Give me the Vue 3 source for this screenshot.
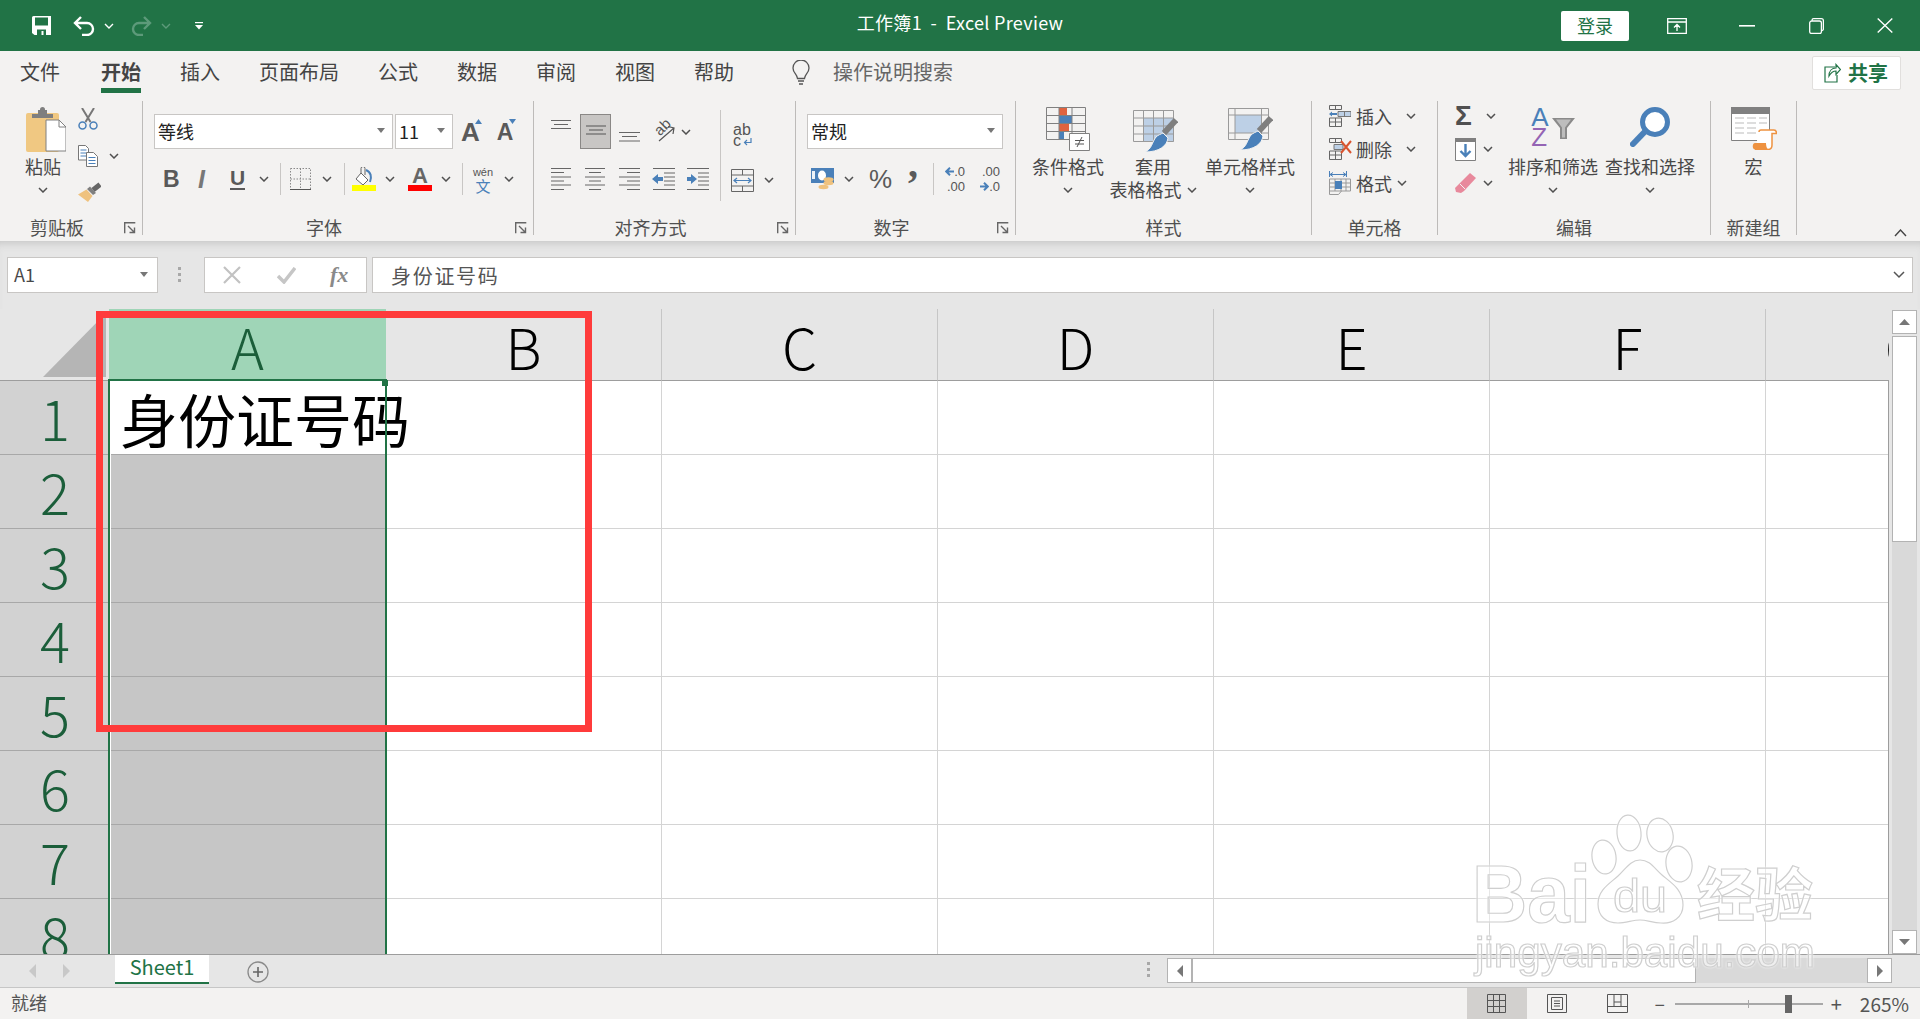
<script setup>
const cols = ['A', 'B', 'C', 'D', 'E', 'F', 'G']
const rows = [1, 2, 3, 4, 5, 6, 7, 8]
const tabs = ['文件', '开始', '插入', '页面布局', '公式', '数据', '审阅', '视图', '帮助']

const cellClass = (col, row) => ({
  'cell-sel': col === 'A' && row > 1,
  'cell-a': col === 'A',
})
</script>

<template>
  <div class="app">
    <!-- shared icon bits -->
    <svg class="defs" width="0" height="0">
      <symbol id="chev" viewBox="0 0 10 6"><path d="M1 1l4 4 4-4" fill="none" stroke="#505050" stroke-width="1.5" /></symbol>
      <symbol id="launch" viewBox="0 0 12 12"><path d="M.7 11.3V.7h10.6M4 4l6 6M10.5 5.5v5h-5" fill="none" stroke="#666" stroke-width="1.4" /></symbol>
    </svg>

    <header class="titlebar">
      <div class="qat">
        <svg class="m32" width="19" height="19" viewBox="0 0 19 19"><path d="M0 1.500A1.500 1.500 0 0 1 1.500 0H19v19H2.500L0 17z" fill="#fff" /><path d="M3 1.500h13v8H3z" fill="#217346" /><path d="M5 13.500h9V19H5z" fill="#217346" /><path d="M9.500 15h2v4h-2z" fill="#fff" /></svg>
        <svg class="m22" width="22" height="20" viewBox="0 0 22 20"><path d="M8 1L2 7l6 6M2 7h12a6 6 0 0 1 0 12H9" fill="none" stroke="#fff" stroke-width="2.400" /></svg>
        <svg class="chev-w m9" width="10" height="6"><path d="M1 1l4 4 4-4" fill="none" stroke="#fff" stroke-width="1.400" /></svg>
        <svg class="m17" width="21" height="20" viewBox="0 0 21 20"><path d="M13 1l6 6-6 6M19 7H8a6 6 0 0 0 0 12h4" fill="none" stroke="#5d9a7a" stroke-width="2.400" /></svg>
        <svg class="m9" width="10" height="6"><path d="M1 1l4 4 4-4" fill="none" stroke="#5d9a7a" stroke-width="1.400" /></svg>
        <svg class="m24" width="8" height="8" viewBox="0 0 8 8"><path d="M0 .6h8" stroke="#fff" stroke-width="1.200" /><path d="M0 3h8L4 7.500z" fill="#fff" /></svg>
      </div>
      <div class="doc-title">工作簿1&nbsp;&nbsp;-&nbsp;&nbsp;Excel Preview</div>
      <div class="win">
        <button class="login">登录</button>
        <svg class="m38" width="20" height="16" viewBox="0 0 20 16"><path d="M.7.7h18.600v14.600H.7zM.7 4h18.600M10 13V7M7 9.500l3-3 3 3" fill="none" stroke="#fff" stroke-width="1.300" /></svg>
        <svg class="m52" width="16" height="2"><rect width="16" height="1.600" fill="#fff" /></svg>
        <svg class="m54" width="15" height="16" viewBox="0 0 15 16"><path d="M3 3V2.200A1.600 1.600 0 0 1 4.600.7h7.800a2 2 0 0 1 2 2V11A1.600 1.600 0 0 1 13 12.600h-.6M.7 5a2 2 0 0 1 2-2H10.400a2 2 0 0 1 2 2v8.800a1.600 1.600 0 0 1-1.600 1.600H2.300a1.600 1.600 0 0 1-1.600-1.600z" fill="none" stroke="#fff" stroke-width="1.300" /></svg>
        <svg class="m53 m-end" width="16" height="15" viewBox="0 0 16 15"><path d="M.7.500l14.600 14M15.300.500L.7 14.500" stroke="#fff" stroke-width="1.400" /></svg>
      </div>
    </header>

    <nav class="tabs">
      <span v-for="t in tabs" :key="t" class="tab" :class="{ 'tab-on': t === '开始' }">{{ t }}</span>
      <svg class="bulb" width="18" height="26" viewBox="0 0 18 26"><path d="M5.500 18.500C5 14 1 13 1 8a8 8 0 0 1 16 0c0 5-4 6-4.500 10.500zM6 21h6M7 24h4" fill="none" stroke="#555" stroke-width="1.300" /></svg>
      <span class="search">操作说明搜索</span>
      <span class="share">
        <svg width="17" height="20" viewBox="0 0 17 20"><path d="M11 4H1v15h12v-7" fill="none" stroke="#217346" stroke-width="1.200" /><path d="M5 13c0-5 3-8 7-8V1.500l4.500 5-4.500 5V8c-3 0-5 1.500-7 5z" fill="none" stroke="#217346" stroke-width="1.200" /></svg>
        <b>共享</b>
      </span>
    </nav>

    <section class="ribbon">
      <!-- 剪贴板 -->
      <div class="group g-clip">
        <div class="body">
          <div class="big paste">
            <div class="big-ic">
              <svg class="paste-ic" width="40" height="45" viewBox="0 0 40 45">
                <rect y="6" width="33" height="39" rx="2" fill="#f0c882" />
                <path d="M6 7h21V11H6zM12 3h9v5h-9z" fill="#7f7f7f" /><circle cx="16.500" cy="2.500" r="2.500" fill="#7f7f7f" />
                <path d="M20 21h13l7 7v24H20z" transform="translate(0 -8)" fill="#fff" stroke="#808080" />
                <path d="M33 13v7h7" fill="none" stroke="#808080" />
              </svg>
            </div>
            <span class="big-text">粘贴</span>
            <svg class="chev big-chev"><use href="#chev" /></svg>
          </div>
          <div class="clip-small">
            <svg width="20" height="22" viewBox="0 0 20 22"><path d="M4 0l8.500 14M16 0L7.500 14" stroke="#777" stroke-width="2" /><circle cx="4.500" cy="17.500" r="3.500" fill="none" stroke="#4a80b9" stroke-width="1.500" /><circle cx="15.500" cy="17.500" r="3.500" fill="none" stroke="#4a80b9" stroke-width="1.500" /></svg>
            <div class="clip-copy">
              <svg width="20" height="22" viewBox="0 0 20 22"><path d="M.5.500h7l3 3V15H.5z" fill="#fff" stroke="#777" /><path d="M2.500 5h6M2.500 8h6M2.500 11h6" stroke="#4a80b9" /><path d="M8.500 7.500h7l4 4v10h-11z" fill="#fff" stroke="#777" /><path d="M10.500 12.500h7M10.500 15.500h7M10.500 18.500h7" stroke="#4a80b9" /></svg>
              <svg class="chev m11"><use href="#chev" /></svg>
            </div>
            <svg width="23" height="20" viewBox="0 0 23 20"><path d="M22 2.500L15 8" stroke="#666" stroke-width="5" /><path d="M12 4.500l6 6.500-3 2-6-6z" fill="#7f7f7f" /><path d="M8.500 7.500l6 6.500L10 20 0 12.500z" fill="#efc27e" /></svg>
          </div>
        </div>
        <div class="foot foot-l"><span class="foot-t">剪贴板</span><svg class="launch"><use href="#launch" /></svg></div>
      </div>

      <!-- 字体 -->
      <div class="group g-font">
        <div class="body col">
          <div class="r1">
            <div class="combo w239"><span>等线</span><i class="tri" /></div>
            <div class="combo w58 m2"><span>11</span><i class="tri" /></div>
            <div class="grow-a m8">A<svg width="7" height="5"><path d="M0 5h7L3.500 0z" fill="#4a80b9" /></svg></div>
            <div class="shrink-a m15">A<svg width="7" height="5"><path d="M0 0h7L3.500 5z" fill="#4a80b9" /></svg></div>
          </div>
          <div class="r2">
            <span class="fmt w14 m9">B</span>
            <span class="fmt w11 m21 ital">I</span>
            <span class="fmt w15 m21 under">U</span>
            <svg class="chev m14"><use href="#chev" /></svg>
            <i class="vline m11" />
            <svg class="m9" width="21" height="22" viewBox="0 0 21 22"><path d="M.5.500h20v21H.5zM10.500.500v21M.5 11h20" fill="none" stroke="#8a8a8a" stroke-dasharray="1.500 1.500" /><path d="M0 21.500h21" stroke="#555" /></svg>
            <svg class="chev m11"><use href="#chev" /></svg>
            <i class="vline m12" />
            <svg class="m7" width="24" height="24" viewBox="0 0 24 24"><path d="M9 6l7 7-5 5-7-6z" fill="#fff" stroke="#666" /><path d="M9 6V1.500a2 2 0 0 1 4 0V8" fill="none" stroke="#666" /><path d="M14 3c5 2 6 7 4 12" fill="none" stroke="#4a80b9" stroke-width="2" /><rect y="18" width="24" height="6" fill="#ffff00" /></svg>
            <svg class="chev m9"><use href="#chev" /></svg>
            <div class="font-color m13"><span>A</span></div>
            <svg class="chev m9"><use href="#chev" /></svg>
            <i class="vline m11" />
            <div class="wen m10"><span class="wen-a">wén</span><span class="wen-b">文</span></div>
            <svg class="chev m11"><use href="#chev" /></svg>
          </div>
        </div>
        <div class="foot foot-l"><span class="foot-t">字体</span><svg class="launch"><use href="#launch" /></svg></div>
      </div>

      <!-- 对齐方式 -->
      <div class="group g-align">
        <div class="body">
          <div class="align-left">
            <div class="r1">
              <svg class="m17" width="20" height="35" viewBox="0 0 20 35"><path d="M0 6.500h20M3 10.500h14M0 14.500h20" stroke="#666" /></svg>
              <div class="align-on m9"><svg width="20" height="33" viewBox="0 0 20 33"><path d="M0 11h20M3 15h14M0 19h20" stroke="#555" /></svg></div>
              <svg class="m8" width="21" height="35" viewBox="0 0 21 35"><path d="M0 18.500h21M3 22.500h15M0 27h21" stroke="#666" /></svg>
              <div class="orient m14"><span>ab</span><svg class="orient-arrow" width="22" height="20" viewBox="0 0 22 20"><path d="M5 18L20 5M14 3.500l6 1.500-1 6" fill="none" stroke="#555" stroke-width="1.200" /></svg></div>
              <svg class="chev m5"><use href="#chev" /></svg>
            </div>
            <div class="r2">
              <svg class="m17" width="20" height="22" viewBox="0 0 20 22"><path d="M0 .5h20M0 4.500h13M0 9h20M0 13h13M0 17h20M0 21.500h13" stroke="#666" /></svg>
              <svg class="m14" width="20" height="22" viewBox="0 0 20 22"><path d="M0 .5h20M4 4.500h12M0 9h20M4 13h12M0 17h20M4 21.500h12" stroke="#666" /></svg>
              <svg class="m14" width="21" height="22" viewBox="0 0 21 22"><path d="M0 .5h21M8 4.500h13M0 9h21M8 13h13M0 17h21M8 21.500h13" stroke="#666" /></svg>
              <svg class="m12" width="23" height="22" viewBox="0 0 23 22"><path d="M1 .5h22M12 5h11M12 9h11M12 13h11M12 17h11M1 21.500h22" stroke="#666" /><path d="M0 11l6-5v3h5v4H6v3z" fill="#4a80b9" /></svg>
              <svg class="m12" width="22" height="22" viewBox="0 0 22 22"><path d="M0 .5h22M11 5h11M11 9h11M11 13h11M11 17h11M0 21.500h22" stroke="#666" /><path d="M10 11L4 6v3H0v4h4v3z" fill="#4a80b9" /></svg>
            </div>
          </div>
          <i class="vline-tall" />
          <div class="align-right">
            <div class="wrap">
              <div class="wrap-ab">ab</div>
              <div class="wrap-c">c<svg width="9" height="8" viewBox="0 0 9 8"><path d="M8 0v4.500H2M4 2L1.500 4.500 4 7" fill="none" stroke="#4a80b9" stroke-width="1.200" /></svg></div>
            </div>
            <div class="r2 merge">
              <svg width="23" height="23" viewBox="0 0 23 23"><path d="M.5.500h22v22H.5zM.5 6h22M.5 17h22M11.500.500V6M11.500 17v5.500" fill="none" stroke="#666" /><path d="M3 11.500h17M6 9l-3 2.500L6 14M17 9l3 2.500L17 14" fill="none" stroke="#4a80b9" stroke-width="1.200" /></svg>
              <svg class="chev m10"><use href="#chev" /></svg>
            </div>
          </div>
        </div>
        <div class="foot foot-l"><span class="foot-t">对齐方式</span><svg class="launch"><use href="#launch" /></svg></div>
      </div>

      <!-- 数字 -->
      <div class="group g-num">
        <div class="body col">
          <div class="r1">
            <div class="combo w196"><span>常规</span><i class="tri" /></div>
          </div>
          <div class="r2">
            <svg class="m4" width="23" height="23" viewBox="0 0 23 23"><rect width="23" height="15" fill="#4a80b9" /><ellipse cx="11" cy="7.500" rx="4" ry="5" fill="#fff" /><rect x="1" y="3" width="3" height="8" fill="#fff" opacity=".9" /><ellipse cx="17.500" cy="11.500" rx="5" ry="2.200" fill="#efc27e" /><ellipse cx="17.500" cy="15" rx="5" ry="2.200" fill="#efc27e" /><ellipse cx="12.500" cy="19" rx="5" ry="2.200" fill="#efc27e" /></svg>
            <svg class="chev m10"><use href="#chev" /></svg>
            <span class="pct m15">%</span>
            <span class="comma m18">,</span>
            <i class="vline m14" />
            <div class="dec m9"><span><svg width="9" height="9" viewBox="0 0 9 9"><path d="M9 4.500H2M5 .8L1.200 4.500 5 8.200" fill="none" stroke="#4a80b9" stroke-width="2" /></svg>.0</span><span>.00</span></div>
            <div class="dec m13"><span>.00</span><span><svg width="9" height="9" viewBox="0 0 9 9"><path d="M0 4.500h7M4 .8l3.800 3.700L4 8.200" fill="none" stroke="#4a80b9" stroke-width="2" /></svg>.0</span></div>
          </div>
        </div>
        <div class="foot foot-l"><span class="foot-t">数字</span><svg class="launch"><use href="#launch" /></svg></div>
      </div>

      <!-- 样式 -->
      <div class="group g-style">
        <div class="body">
          <div class="big w80">
            <div class="big-ic">
              <svg width="44" height="44" viewBox="0 0 44 44">
                <path d="M13 0h8v8h-8zM26 0" fill="#df6340" />
                <path d="M13 8h13v8H13z" fill="#4a80b9" />
                <path d="M13 16h10v8H13z" fill="#df6340" />
                <path d="M13 25h5v7h-5z" fill="#4a80b9" />
                <path d="M.5.500h39v32H.5zM.5 8.500h39M.5 16.500h39M.5 24.500h39M13 .5v32M26 .5v32" fill="none" stroke="#808080" />
                <path d="M23.500 26.500h20v17h-20z" fill="#fff" stroke="#808080" />
                <path d="M29 33.500h9M29 37h9M31 40l5-10" stroke="#555" fill="none" />
              </svg>
            </div>
            <span class="big-text">条件格式</span>
            <svg class="chev big-chev"><use href="#chev" /></svg>
          </div>
          <div class="big w88 m1">
            <div class="big-ic">
              <svg class="ic-table" width="45" height="42" viewBox="0 0 45 42">
                <path d="M11 8h30v24H11z" fill="#bdd0e6" />
                <path d="M.5.500h40v31H.5zM.5 8h40M.5 16h40M.5 24h40M10.500.5v31M20.500.5v31M30.500.5v31" fill="none" stroke="#9a9a9a" />
                <path d="M43 10L31 23" stroke="#7f7f7f" stroke-width="6" />
                <path d="M30 23l5 5c-1 8-9 14-23 14 7-3 7-10 11-15 2-2 5-3 7-4z" fill="#4a80b9" stroke="#f3f2f1" />
              </svg>
            </div>
            <span class="big-text">套用</span>
            <span class="big-text">表格格式<svg class="chev m5"><use href="#chev" /></svg></span>
          </div>
          <div class="big w90 m8">
            <div class="big-ic">
              <svg class="ic-style" width="45" height="42" viewBox="0 0 45 42">
                <path d="M7 7h26v18H7z" fill="#bdd0e6" />
                <path d="M.5.500h40v31H.5zM.5 7h40M.5 25h40M7 .5v31M33.500.5v31" fill="none" stroke="#9a9a9a" />
                <path d="M43 10L31 23" stroke="#7f7f7f" stroke-width="6" />
                <path d="M30 23l5 5c-1 8-9 14-23 14 7-3 7-10 11-15 2-2 5-3 7-4z" fill="#4a80b9" stroke="#f3f2f1" />
              </svg>
            </div>
            <span class="big-text">单元格样式</span>
            <svg class="chev big-chev"><use href="#chev" /></svg>
          </div>
        </div>
        <div class="foot"><span class="foot-t">样式</span></div>
      </div>

      <!-- 单元格 -->
      <div class="group g-cells">
        <div class="body col">
          <div class="cell-btn">
            <svg width="22" height="22" viewBox="0 0 22 22"><path d="M.5.500h12v4H.5zM6.500.5v4M.5 13h12v8.500H.5zM.5 17h12M6.500 13v8.500" fill="none" stroke="#666" /><path d="M9 6.500h13v5H9zM15.500 6.500v5" fill="#bdd0e6" stroke="#777" /><path d="M0 9l3-2.500v1.500h5v2H3v1.500z" fill="#4a80b9" /></svg>
            <span>插入</span>
            <svg class="chev m14"><use href="#chev" /></svg>
          </div>
          <div class="cell-btn">
            <svg width="23" height="22" viewBox="0 0 23 22"><path d="M.5.500h12v4H.5zM6.500.5v4M.5 13h12v8.500H.5zM.5 17h12M6.500 13v8.500" fill="none" stroke="#666" /><path d="M5 6.500h9v5H5z" fill="#bdd0e6" stroke="#777" /><path d="M12 3l10 12M22 3L12 15" stroke="#d9542f" stroke-width="2" /></svg>
            <span class="m4">删除</span>
            <svg class="chev m14"><use href="#chev" /></svg>
          </div>
          <div class="cell-btn">
            <svg width="22" height="24" viewBox="0 0 22 24"><path d="M1 3.500h16M4 1.500l-3 2 3 2M14 1.500l3 2-3 2M.5 0v6M17.500 0v6" fill="none" stroke="#4a80b9" /><path d="M.5 8h21v12H.5zM.5 12h21M.5 16h21M6 8v12M12 8v12M17 8v12" fill="none" stroke="#999" /><path d="M6 10h7v8H6z" fill="#4a80b9" /><path d="M.5 20v3.500h9l3-3.500" fill="none" stroke="#999" /></svg>
            <span>格式</span>
            <svg class="chev m5"><use href="#chev" /></svg>
          </div>
        </div>
        <div class="foot"><span class="foot-t">单元格</span></div>
      </div>

      <!-- 编辑 -->
      <div class="group g-edit">
        <div class="body">
          <div class="edit-small">
            <div class="edit-row">
              <span class="sigma">Σ</span>
              <svg class="chev m11"><use href="#chev" /></svg>
            </div>
            <div class="edit-row">
              <svg width="21" height="23" viewBox="0 0 21 23"><path d="M.5.500h20v22H.5z" fill="#fff" stroke="#7f7f7f" /><path d="M0 0h21v4H0z" fill="#7f7f7f" /><path d="M10.500 6v12M5.500 13l5 5 5-5" fill="none" stroke="#4a80b9" stroke-width="2.400" /></svg>
              <svg class="chev m7"><use href="#chev" /></svg>
            </div>
            <div class="edit-row">
              <svg width="21" height="20" viewBox="0 0 21 20"><path d="M15 0l6 5-12 13-3 2-5-1-1-4z" fill="#e8899c" /><path d="M5 11l5 5" stroke="#f3f2f1" /></svg>
              <svg class="chev m7"><use href="#chev" /></svg>
            </div>
          </div>
          <div class="big w90">
            <div class="big-ic sort-ic">
              <div class="az"><span class="az-a">A</span><span class="az-z">Z</span></div>
              <svg width="23" height="21" viewBox="0 0 23 21"><path d="M0 0h23l-8 10v11H8V10z" fill="#8a8a8a" /><path d="M4 1.500h15l-6 8v10h-3V9.500z" fill="#bdbdbd" /></svg>
            </div>
            <span class="big-text">排序和筛选</span>
            <svg class="chev big-chev"><use href="#chev" /></svg>
          </div>
          <div class="big w90 m7">
            <div class="big-ic">
              <svg width="40" height="40" viewBox="0 0 40 40"><circle cx="25" cy="15" r="12.500" fill="#fff" stroke="#4a80b9" stroke-width="5" /><path d="M15.500 24L3 37" stroke="#4a80b9" stroke-width="6" stroke-linecap="round" /></svg>
            </div>
            <span class="big-text">查找和选择</span>
            <svg class="chev big-chev"><use href="#chev" /></svg>
          </div>
        </div>
        <div class="foot"><span class="foot-t">编辑</span></div>
      </div>

      <!-- 新建组 -->
      <div class="group g-new">
        <div class="body">
          <div class="big w-full">
            <div class="big-ic">
              <svg width="46" height="43" viewBox="0 0 46 43">
                <path d="M.5.500h38v33H.5z" fill="#fff" stroke="#808080" />
                <path d="M0 0h39v7H0z" fill="#808080" />
                <path d="M4 11h9M16 11h9M28 11h8M4 16h9M16 16h9M28 16h8M4 21h9M16 21h9M4 26h9M16 26h9" stroke="#bbb" stroke-width="1.200" />
                <path d="M28 25a2 2 0 0 1 2-2h13c2 0 2.500 2 2.500 3.500H41V38c0 3-2 4.500-4 4.500H24" fill="#fff" stroke="#ee9240" stroke-width="1.500" />
                <path d="M24 36h11c0 3 1 6.500 3 6.500H24c-3 0-3-6.500 0-6.500z" fill="#ee9240" />
              </svg>
            </div>
            <span class="big-text">宏</span>
          </div>
        </div>
        <div class="foot"><span class="foot-t">新建组</span></div>
      </div>

      <svg class="collapse" width="13" height="8" viewBox="0 0 13 8"><path d="M1 7l5.500-6L12 7" fill="none" stroke="#444" stroke-width="1.400" /></svg>
    </section>

    <div class="fbar">
      <div class="namebox"><span>A1</span><i class="tri" /></div>
      <div class="dots"><i /><i /><i /></div>
      <div class="fbtns">
        <svg width="18" height="18" viewBox="0 0 18 18"><path d="M1 1l16 16M17 1L1 17" stroke="#c2c2c2" stroke-width="2.200" /></svg>
        <svg class="m36" width="19" height="17" viewBox="0 0 19 17"><path d="M1 9l6 6L18 1" fill="none" stroke="#c6c6c6" stroke-width="3.500" /></svg>
        <span class="fx m34">fx</span>
      </div>
      <div class="finput"><span>身份证号码</span><svg class="chev-f" width="12" height="8" viewBox="0 0 12 8"><path d="M1 1l5 5 5-5" fill="none" stroke="#555" stroke-width="1.500" /></svg></div>
    </div>

    <div class="sheet-wrap">
      <div class="sheet">
        <div class="corner">
          <svg width="109" height="71" viewBox="0 0 109 71"><path d="M43 68L106 4v64z" fill="#b5b5b5" /></svg>
        </div>
        <div v-for="c in cols" :key="c" class="col-head" :class="{ 'head-on': c === 'A' }">{{ c }}</div>
        <template v-for="r in rows" :key="r">
          <div class="row-head">{{ r }}</div>
          <div v-for="c in cols" :key="c + r" class="cell" :class="cellClass(c, r)">
            <span v-if="c === 'A' && r === 1" class="a1-text">身份证号码</span>
          </div>
        </template>
        <div class="sel-outline"><i class="handle" /></div>
        <i class="sheet-edge" />
      </div>
      <div class="vscroll">
        <div class="sb-btn up"><svg width="11" height="6"><path d="M0 6h11L5.500 0z" fill="#777" /></svg></div>
        <div class="sb-thumb" />
        <div class="sb-track" />
        <div class="sb-btn"><svg width="11" height="6"><path d="M0 0h11L5.500 6z" fill="#777" /></svg></div>
      </div>
    </div>

    <div class="sheetbar">
      <svg class="m29" width="7" height="14"><path d="M7 0v14L0 7z" fill="#c8c8c8" /></svg>
      <svg class="m27" width="7" height="14"><path d="M0 0v14l7-7z" fill="#c8c8c8" /></svg>
      <div class="sheet-tab">Sheet1</div>
      <svg class="m38" width="22" height="22" viewBox="0 0 22 22"><circle cx="11" cy="11" r="10" fill="none" stroke="#8a8a8a" stroke-width="1.300" /><path d="M11 6v10M6 11h10" stroke="#666" stroke-width="1.600" /></svg>
      <div class="dots dots-h"><i /><i /><i /></div>
      <div class="hscroll">
        <div class="hs-btn"><svg width="6" height="12"><path d="M6 0v12L0 6z" fill="#777" /></svg></div>
        <div class="hs-thumb" />
        <div class="hs-track" />
        <div class="hs-btn"><svg width="6" height="12"><path d="M0 0v12l6-6z" fill="#777" /></svg></div>
      </div>
    </div>

    <footer class="status">
      <span class="ready">就绪</span>
      <div class="status-right">
        <div class="view-on">
          <svg width="19" height="19" viewBox="0 0 19 19"><path d="M.5.500h18v18H.5zM.5 6.500h18M.5 12.500h18M6.500.5v18M12.500.5v18" fill="none" stroke="#555" /></svg>
        </div>
        <svg class="m20" width="20" height="19" viewBox="0 0 20 19"><path d="M.5.500h19v18H.5z" fill="none" stroke="#555" /><path d="M4.500 3.500h11v12h-11zM7 7h6M7 9.500h6M7 12h6" fill="none" stroke="#555" /></svg>
        <svg class="m40" width="21" height="19" viewBox="0 0 21 19"><path d="M.5.500h20v18H.5zM.5 12.500h20M7 .5v12M14 .5v12M7 8h7" fill="none" stroke="#555" /></svg>
        <span class="zoom-m">−</span>
        <div class="slider"><i class="slider-tick" /><i class="slider-thumb" /></div>
        <span class="zoom-p">+</span>
        <span class="zoom-v">265%</span>
      </div>
    </footer>

    <!-- over everything: the annotation box and the watermark -->
    <div class="red-box" />
    <svg class="wm" width="1920" height="1019" viewBox="0 0 1920 1019">
      <g class="wm-shape">
        <ellipse cx="1604" cy="857" rx="12" ry="17" transform="rotate(-8 1604 857)" />
        <ellipse cx="1629" cy="833" rx="12" ry="18" transform="rotate(-5 1629 833)" />
        <ellipse cx="1660" cy="835" rx="13" ry="17" transform="rotate(-12 1660 835)" />
        <ellipse cx="1679" cy="864" rx="13" ry="18" transform="rotate(-8 1679 864)" />
        <path d="M1640 860c10 0 14 8 22 15 8 7 21 14 21 30 0 13-11 19-22 18-8 0-14-3-21-3s-14 3-22 3c-12 0-20-7-20-19 0-14 11-20 20-28 7-6 12-16 22-16z" />
        <text x="1472" y="922" font-size="82" font-weight="700" textLength="119" lengthAdjust="spacingAndGlyphs" font-family="Liberation Sans">Bai</text>
        <text x="1613" y="912" font-size="46" textLength="54" lengthAdjust="spacingAndGlyphs" font-family="Liberation Sans">du</text>
        <text x="1697" y="916" font-size="58" font-weight="700" font-family="Noto Sans CJK SC">经验</text>
        <text x="1475" y="967" font-size="42" textLength="340" lengthAdjust="spacingAndGlyphs" font-family="Liberation Sans">jingyan.baidu.com</text>
      </g>
    </svg>
  </div>
</template>

<style>
html,
body {
  margin: 0;
  overflow: hidden;
}
</style>

<style scoped>
.app {
  position: relative;
  width: 1920px;
  height: 1019px;
  overflow: hidden;
  display: flex;
  flex-direction: column;
  background: #f3f2f1;
  color: #444;
  font-family: "Noto Sans CJK SC", "Noto Sans", sans-serif;
}

.defs {
  position: absolute;
}

svg {
  display: block;
  flex: none;
}

/* margin helpers, the ribbon is a lot of small offsets */
.m1 { margin-left: 1px; }
.m2 { margin-left: 2px; }
.m4 { margin-left: 4px; }
.m5 { margin-left: 5px; }
.m7 { margin-left: 7px; }
.m8 { margin-left: 8px; }
.m9 { margin-left: 9px; }
.m10 { margin-left: 10px; }
.m11 { margin-left: 11px; }
.m12 { margin-left: 12px; }
.m13 { margin-left: 13px; }
.m14 { margin-left: 14px; }
.m15 { margin-left: 15px; }
.m17 { margin-left: 17px; }
.m18 { margin-left: 18px; }
.m20 { margin-left: 20px; }
.m21 { margin-left: 21px; }
.m22 { margin-left: 22px; }
.m24 { margin-left: 24px; }
.m27 { margin-left: 27px; }
.m29 { margin-left: 29px; }
.m32 { margin-left: 32px; }
.m34 { margin-left: 34px; }
.m36 { margin-left: 36px; }
.m38 { margin-left: 38px; }
.m40 { margin-left: 40px; }
.m52 { margin-left: 52px; }
.m53 { margin-left: 53px; }
.m54 { margin-left: 54px; }
.m-end { margin-right: 27px; }

/* title bar */
.titlebar {
  height: 51px;
  flex: none;
  display: grid;
  grid-template-columns: 1fr auto 1fr;
  align-items: center;
  background: #217346;
}

.qat,
.win {
  display: flex;
  align-items: center;
}

.win {
  justify-content: flex-end;
}

.doc-title {
  margin-bottom: 7px;
  color: #fff;
  font-size: 18px;
  letter-spacing: 0.3px;
  white-space: nowrap;
}

.login {
  width: 68px;
  height: 30px;
  padding: 0 0 2px;
  border: 0;
  border-radius: 2px;
  background: #fff;
  color: #217346;
  font: 18px "Noto Sans CJK SC", sans-serif;
}

/* tab row */
.tabs {
  height: 46px;
  flex: none;
  display: flex;
  align-items: flex-start;
  padding-left: 20px;
  font-size: 20px;
  line-height: 42px;
}

.tab {
  margin-right: 39px;
  height: 37px;
  color: #444;
}

.tab-on {
  margin-left: 2px;
  font-weight: 700;
  border-bottom: 5px solid #217346;
}

.bulb {
  margin: 9px 0 0 19px;
}

.search {
  margin-left: 23px;
  color: #666;
}

.share {
  margin-left: auto;
  margin-right: 19px;
  margin-top: 5px;
  width: 89px;
  height: 34px;
  box-sizing: border-box;
  display: flex;
  align-items: center;
  gap: 7px;
  padding-left: 11px;
  background: #fff;
  border: 1px solid #e1dfdd;
  border-radius: 2px;
  color: #217346;
  line-height: 1;
}

/* ribbon */
.ribbon {
  position: relative;
  height: 144px;
  flex: none;
  box-sizing: border-box;
  padding-top: 4px;
  display: flex;
  align-items: flex-start;
}

.group {
  height: 134px;
  flex: none;
  box-sizing: border-box;
  display: flex;
  flex-direction: column;
  border-right: 1.5px solid #bdbbb9;
}

.g-clip { width: 143px; }
.g-font { width: 391px; }
.g-align { width: 262px; }
.g-num { width: 220px; }
.g-style { width: 296px; }
.g-cells { width: 126px; }
.g-edit { width: 273px; }
.g-new { width: 86px; }

.body {
  height: 115px;
  flex: none;
  display: flex;
}

.body.col {
  flex-direction: column;
}

.foot {
  height: 18px;
  display: flex;
  align-items: center;
  font-size: 18px;
  line-height: 19px;
  color: #505050;
}

.foot-t {
  flex: 1;
  padding-top: 5px;
  text-align: center;
}

.launch {
  width: 12px;
  height: 12px;
  margin: 6px 6px 0 10px;
}

.chev {
  width: 10px;
  height: 6px;
}

.tri {
  width: 0;
  height: 0;
  margin-left: auto;
  border: 4px solid transparent;
  border-top: 5px solid #777;
  border-bottom: 0;
}

/* big buttons with text under the icon */
.big {
  flex: none;
  display: flex;
  flex-direction: column;
  align-items: center;
  padding-top: 4px;
}

.big-ic {
  height: 50px;
  display: flex;
  align-items: flex-start;
  justify-content: center;
  padding-top: 2px;
  box-sizing: border-box;
}

.big-text {
  display: flex;
  align-items: center;
  height: 23px;
  font-size: 18px;
  line-height: 23px;
  white-space: nowrap;
  color: #484848;
}

.big-chev {
  margin-top: 9px;
}

.w80 { width: 80px; }
.w88 { width: 88px; }
.w90 { width: 90px; }
.w-full { width: 100%; }

.paste {
  width: 86px;
}

.paste-ic {
  margin-left: 6px;
}

.ic-table {
  margin: 3px 0 0 4px;
}

.ic-style {
  margin: 1px 0 0 1px;
}

.clip-small {
  display: flex;
  flex-direction: column;
  gap: 15px;
  margin-left: -8px;
  padding-top: 7px;
}

.clip-copy {
  display: flex;
  align-items: center;
}

.g-style .body { padding-left: 12px; }

/* small toolbars */
.r1 {
  display: flex;
  align-items: center;
  height: 35px;
  margin-top: 13px;
}

.r2 {
  display: flex;
  align-items: center;
  height: 32px;
  margin-top: 14px;
}

.g-font .body,
.g-num .body {
  padding-left: 11px;
}

.combo {
  height: 35px;
  box-sizing: border-box;
  display: flex;
  align-items: center;
  padding: 0 7px 2px 3px;
  background: #fff;
  border: 1px solid #c8c6c4;
  font-size: 18px;
  color: #222;
}

.w239 { width: 239px; }
.w58 { width: 58px; }
.w196 { width: 196px; }

.grow-a,
.shrink-a {
  display: flex;
  color: #5a5a5a;
  font: 700 26px/30px "Liberation Sans", sans-serif;
}

.shrink-a {
  font-size: 23px;
}

.grow-a svg {
  margin: 2px 0 0 -5px;
}

.shrink-a svg {
  margin: 2px 0 0 -4px;
}

.fmt {
  font: 700 23px/1 "Liberation Sans", sans-serif;
  color: #595959;
}

.w14 { width: 14px; }
.w11 { width: 11px; }
.w15 { width: 15px; }

.ital {
  font-size: 25px;
  font-style: italic;
  color: #777;
}

.under {
  font-size: 21px;
  border-bottom: 2px solid #595959;
  line-height: 20px;
}

.vline {
  width: 1px;
  height: 32px;
  flex: none;
  background: #c8c6c4;
}

.font-color {
  width: 24px;
  height: 24px;
  box-sizing: border-box;
  border-bottom: 6px solid #f00;
  text-align: center;
  font: 700 22px/17px "Liberation Sans", sans-serif;
  color: #666;
}

.wen {
  width: 20px;
  display: flex;
  flex-direction: column;
  align-items: center;
  height: 24px;
}

.wen-a {
  font: 11px/11px "Liberation Sans", sans-serif;
  color: #555;
}

.wen-b {
  font-size: 15px;
  line-height: 15px;
  color: #4a80b9;
}

.align-left {
  width: 186px;
  flex: none;
}

.align-on {
  width: 31px;
  height: 35px;
  box-sizing: border-box;
  display: flex;
  justify-content: center;
  align-items: center;
  background: #c8c6c4;
  border: 1px solid #8a8886;
}

.orient {
  position: relative;
  width: 22px;
  height: 24px;
}

.orient span {
  position: absolute;
  left: 0;
  top: -3px;
  font: 15px/20px "Liberation Sans", sans-serif;
  color: #555;
  transform: rotate(-45deg);
}

.orient-arrow {
  position: absolute;
  left: 0;
  top: 3px;
}

.vline-tall {
  width: 1px;
  height: 91px;
  margin-top: 9px;
  flex: none;
  background: #c8c6c4;
}

.align-right {
  margin-left: 10px;
}

.wrap {
  height: 48px;
  padding: 24px 0 0 2px;
  box-sizing: border-box;
  font: 16px/10px "Liberation Sans", sans-serif;
  color: #555;
}

.wrap-c {
  display: flex;
  align-items: center;
  margin-top: 1px;
}

.wrap-c svg {
  margin: 2px 0 0 2px;
}

.merge {
  margin-top: 15px;
}

.pct {
  width: 20px;
  font: 26px/1 "Liberation Sans", sans-serif;
  color: #5a5a5a;
}

.comma {
  width: 12px;
  height: 30px;
  font: 700 40px/0 "Liberation Serif", serif;
  color: #5a5a5a;
  text-align: center;
}

.dec {
  width: 22px;
  display: flex;
  flex-direction: column;
  align-items: flex-end;
  font: 13px/15px "Liberation Sans", sans-serif;
  color: #555;
}

.dec span {
  display: flex;
  align-items: center;
}

.g-cells .body {
  margin: -2px 0 2px;
}

.cell-btn {
  display: flex;
  align-items: center;
  height: 33.500px;
  padding-left: 17px;
  font-size: 18px;
  color: #484848;
}

.cell-btn span {
  margin-left: 5px;
}

.cell-btn span.m4 {
  margin-left: 4px;
}

.edit-small {
  width: 70px;
  height: 101px;
  margin-top: -2px;
  flex: none;
  padding-left: 17px;
  box-sizing: border-box;
}

.edit-row {
  display: flex;
  align-items: center;
  height: 33.500px;
}

.sigma {
  width: 20px;
  font: 700 28px/1 "Liberation Sans", sans-serif;
  color: #505050;
}

.sort-ic {
  gap: 3px;
}

.az {
  display: flex;
  flex-direction: column;
  font: 26px/20px "Liberation Sans", sans-serif;
}

.az-a {
  color: #4a80b9;
}

.az-z {
  color: #9464b4;
}

.sort-ic svg {
  margin-top: 11px;
}

.collapse {
  position: absolute;
  right: 13px;
  top: 132px;
}

/* formula bar */
.fbar {
  height: 68px;
  flex: none;
  box-sizing: border-box;
  display: flex;
  align-items: flex-start;
  padding: 16px 7px 0 7px;
  background: #e6e6e6;
  box-shadow: inset 0 8px 8px -6px #c4c4c4;
  font-size: 18px;
}

.namebox,
.fbtns,
.finput {
  height: 36px;
  box-sizing: border-box;
  display: flex;
  align-items: center;
  background: #fff;
  border: 1px solid #c8c6c4;
  color: #484848;
}

.namebox {
  width: 151px;
  padding: 0 9px 2px 6px;
}

.dots {
  width: 3px;
  display: flex;
  flex-direction: column;
  gap: 3px;
  margin: 10px 23px 0 20px;
}

.dots i {
  width: 3px;
  height: 3px;
  background: #a8a8a8;
}

.fbtns {
  width: 163px;
  padding-left: 18px;
}

.fx {
  font: italic 700 22px/1 "Liberation Serif", serif;
  color: #8a8a8a;
}

.finput {
  flex: 1;
  margin-left: 5px;
  padding: 0 7px 0 18px;
  font-size: 20px;
  letter-spacing: 1.700px;
  color: #555;
}

.chev-f {
  margin-left: auto;
}

/* grid */
.sheet-wrap {
  height: 645px;
  flex: none;
  display: flex;
  background: #e6e6e6;
}

.sheet {
  position: relative;
  width: 1889px;
  height: 645px;
  flex: none;
  overflow: hidden;
  display: grid;
  grid-template-columns: 110px repeat(7, 276px);
  grid-template-rows: 72px repeat(8, 74px);
}

.corner {
  border-bottom: 1px solid #9d9d9d;
}

.col-head {
  box-sizing: border-box;
  display: flex;
  align-items: center;
  justify-content: center;
  padding-top: 2px;
  border-right: 1px solid #c6c6c6;
  border-bottom: 1px solid #9d9d9d;
  font-size: 56px;
  line-height: 1;
  font-weight: 300;
  color: #000;
}

.head-on {
  margin-left: -1px;
  background: #9fd5b7;
  color: #1b5e3a;
  border-right: 0;
}

.row-head {
  box-sizing: border-box;
  display: flex;
  align-items: center;
  justify-content: center;
  padding-bottom: 2px;
  background: #d2d2d2;
  border-bottom: 1px solid #a8a8a8;
  font-size: 56px;
  line-height: 1;
  font-weight: 300;
  color: #1b5e3a;
}

.cell {
  box-sizing: border-box;
  background: #fff;
  border-right: 1px solid #d4d4d4;
  border-bottom: 1px solid #d4d4d4;
}

.cell-a {
  position: relative;
  margin-left: -1px;
  border-right: 0;
  border-bottom-color: #a8a8a8;
}

.cell-sel {
  background: #c6c6c6;
}

.a1-text {
  position: absolute;
  left: 11px;
  top: 0;
  font-size: 58px;
  line-height: 74px;
  color: #000;
  white-space: nowrap;
}

.sel-outline {
  position: absolute;
  left: 108px;
  top: 70px;
  width: 279px;
  bottom: 0;
  box-sizing: border-box;
  border: 2px solid #217346;
  border-bottom: 0;
  box-shadow: inset 1px 0 #fff;
}

.handle {
  position: absolute;
  right: -3px;
  top: -1px;
  width: 6px;
  height: 6px;
  background: #217346;
}

.sheet-edge {
  position: absolute;
  right: 0;
  top: 71px;
  bottom: 0;
  width: 1.500px;
  background: #9d9d9d;
}

.vscroll {
  width: 25px;
  height: 645px;
  margin-left: 3px;
  display: flex;
  flex-direction: column;
}

.sb-btn {
  height: 24px;
  flex: none;
  box-sizing: border-box;
  display: flex;
  align-items: center;
  justify-content: center;
  background: #fff;
  border: 1px solid #b3b3b3;
}

.sb-btn.up {
  margin-top: 1px;
}

.sb-thumb {
  height: 206px;
  flex: none;
  margin-top: 2px;
  box-sizing: border-box;
  background: #fff;
  border: 1px solid #b3b3b3;
}

.sb-track {
  flex: 1;
  background: #d9d9d9;
}

/* sheet tabs + horizontal scrollbar */
.sheetbar {
  height: 34px;
  flex: none;
  box-sizing: border-box;
  display: flex;
  align-items: flex-start;
  background: #e6e6e6;
  border-top: 1.500px solid #9d9d9d;
  border-bottom: 1px solid #c6c6c6;
}

.sheetbar > svg {
  margin-top: 9px;
}

.sheet-tab {
  width: 94px;
  height: 29px;
  margin-left: 45px;
  box-sizing: border-box;
  background: #fff;
  border-bottom: 2px solid #217346;
  color: #217346;
  font-size: 20px;
  line-height: 24px;
  text-align: center;
}

.sheetbar > svg.m38 {
  margin-top: 6px;
}

.dots-h {
  margin: 7px 0 0 878px;
}

.hscroll {
  width: 725px;
  height: 25px;
  margin: 3px 0 0 17px;
  display: flex;
}

.hs-btn {
  width: 25px;
  flex: none;
  box-sizing: border-box;
  display: flex;
  align-items: center;
  justify-content: center;
  background: #fff;
  border: 1px solid #b3b3b3;
}

.hs-thumb {
  width: 504px;
  flex: none;
  box-sizing: border-box;
  background: #fff;
  border: 1px solid #b3b3b3;
}

.hs-track {
  flex: 1;
  background: #d9d9d9;
}

/* status bar */
.status {
  flex: 1;
  display: flex;
  align-items: center;
  padding-left: 11px;
  font-size: 18px;
  color: #555;
}

.ready {
  padding-bottom: 3px;
}

.status-right {
  margin-left: auto;
  height: 100%;
  display: flex;
  align-items: center;
}

.view-on {
  width: 60px;
  height: 100%;
  display: flex;
  align-items: center;
  justify-content: center;
  background: #d2d0ce;
}

.zoom-m {
  margin-left: 27px;
  width: 12px;
  font-size: 18px;
}

.slider {
  position: relative;
  width: 148px;
  height: 2px;
  margin-left: 8px;
  background: #a8a8a8;
}

.slider-tick {
  position: absolute;
  left: 73px;
  top: -3px;
  width: 1px;
  height: 8px;
  background: #a8a8a8;
}

.slider-thumb {
  position: absolute;
  left: 110px;
  top: -8px;
  width: 7px;
  height: 18px;
  background: #666;
}

.zoom-p {
  margin-left: 8px;
  width: 12px;
  font-size: 20px;
}

.zoom-v {
  margin: 0 11px 0 17px;
  font-size: 19px;
}

/* annotation + watermark overlays */
.red-box {
  position: absolute;
  left: 96px;
  top: 311px;
  width: 496px;
  height: 421px;
  box-sizing: border-box;
  border: 7.500px solid #ff3b3b;
}

.wm {
  position: absolute;
  left: 0;
  top: 0;
  pointer-events: none;
  filter: drop-shadow(0 0 1px rgba(255, 255, 255, 0.9)) blur(0.4px);
}

.wm-shape {
  fill: rgba(255, 255, 255, 0.25);
  stroke: #cfcfcf;
  stroke-width: 1.200;
}
</style>
